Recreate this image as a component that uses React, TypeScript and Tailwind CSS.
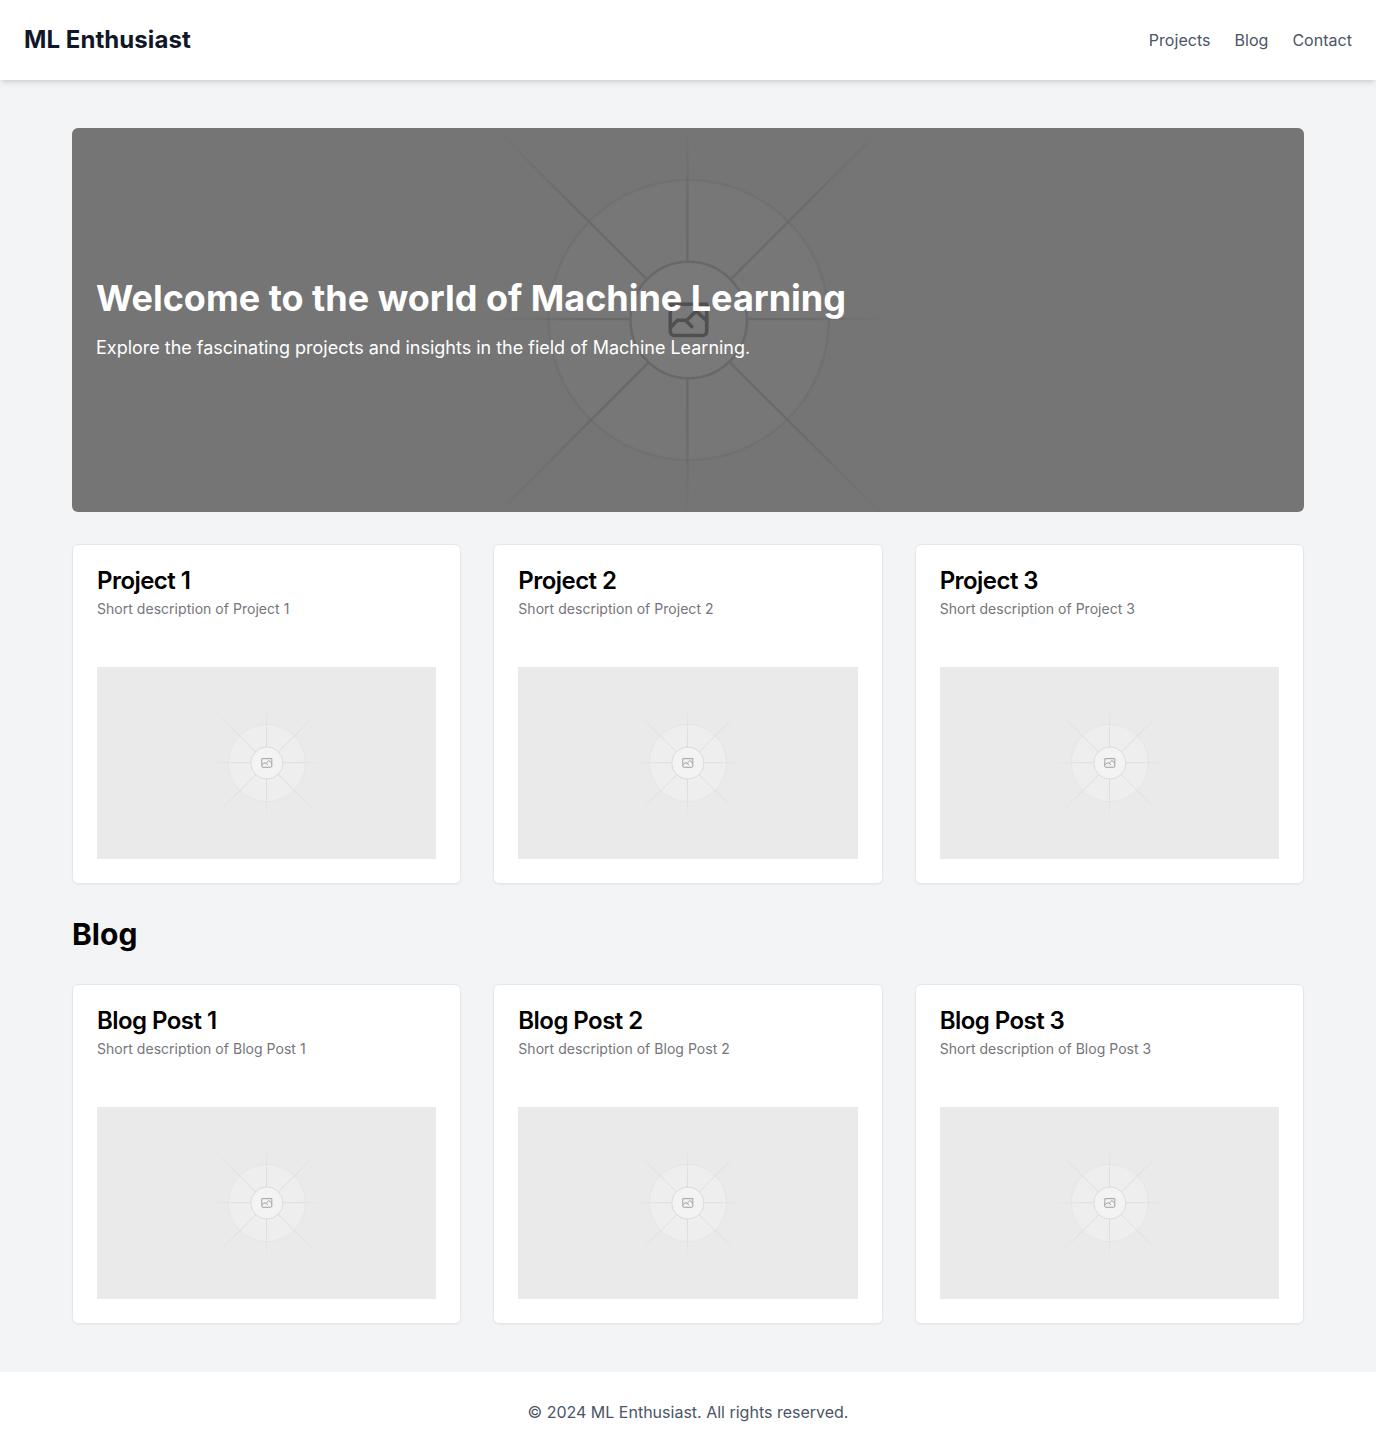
import { useId } from "react";

const spokes = [
  { x1: 615.4, y1: 558, x2: 615.4, y2: 420 },
  { x1: 615.4, y1: 674, x2: 615.4, y2: 812 },
  { x1: 558, y1: 615, x2: 420, y2: 615.01 },
  { x1: 675, y1: 615, x2: 816, y2: 615.01 },
  { x1: 574, y1: 574.5, x2: 420, y2: 421 },
  { x1: 659.5, y1: 574.5, x2: 814, y2: 420 },
  { x1: 576.5, y1: 658.5, x2: 420, y2: 815 },
  { x1: 658, y1: 658.5, x2: 813, y2: 813 },
];

function Placeholder({ className }: { className: string }) {
  const id = useId();
  return (
    <svg
      className={className}
      viewBox="0 0 1232 1232"
      preserveAspectRatio="xMidYMid slice"
      fill="none"
      aria-hidden="true"
    >
      <circle cx="616.7" cy="616" r="140" fill="#fafafa" fillOpacity=".25" />
      <circle cx="616.7" cy="616" r="140" stroke="#c9c9c9" strokeOpacity=".28" strokeWidth="2.5" />
      {spokes.map((s, i) => (
        <g key={i}>
          <linearGradient id={`${id}-${i}`} gradientUnits="userSpaceOnUse" {...s}>
            <stop stopColor="#c9c9c9" stopOpacity=".72" />
            <stop offset=".4" stopColor="#c9c9c9" stopOpacity=".62" />
            <stop offset="1" stopColor="#c9c9c9" stopOpacity="0" />
          </linearGradient>
          <path
            d={`M${s.x1} ${s.y1}L${s.x2} ${s.y2}`}
            stroke={`url(#${id}-${i})`}
            strokeWidth="2.5"
          />
        </g>
      ))}
      <circle cx="616.7" cy="616" r="58.3" fill="#f3f3f3" stroke="#d0d0d0" strokeWidth="2.5" />
      <g stroke="#a0a0a0" strokeWidth="3.6">
        <path d="M598.3 600.2h36.4v27.3a4 4 0 0 1-4 4h-28.4a4 4 0 0 1-4-4z" strokeLinejoin="round" />
        <path d="m598.5 623.5 7-7.3h9.3l9.4-9.2 10.3 9.7M613.5 616l7.3 7.7" />
      </g>
    </svg>
  );
}

function Card({ title }: { title: string }) {
  return (
    <article className="rounded-md border border-gray-200 bg-white shadow-xs">
      <div className="flex flex-col gap-1.5 p-6">
        <h3 className="text-2xl leading-6 font-semibold tracking-[-0.55px] text-black">{title}</h3>
        <p className="text-sm tracking-[0.03px] text-[#75757a]">Short description of {title}</p>
      </div>
      <div className="p-6">
        <Placeholder className="block h-48 w-full bg-[#eaeaea]" />
      </div>
    </article>
  );
}

function CardGrid({ label }: { label: string }) {
  return (
    <div className="grid grid-cols-3 gap-8">
      {[1, 2, 3].map((n) => (
        <Card key={n} title={`${label} ${n}`} />
      ))}
    </div>
  );
}

export default function App() {
  return (
    <div className="flex min-h-screen flex-col bg-gray-100 font-['Inter',sans-serif] text-black">
      <header className="flex h-20 items-center justify-between bg-white px-6 shadow-md">
        <h1 className="text-2xl font-bold tracking-[0.06px] text-gray-900">ML Enthusiast</h1>
        <nav className="flex gap-6 tracking-[0.03px] text-gray-600">
          <a href="#projects">Projects</a>
          <a href="#blog">Blog</a>
          <a href="#contact">Contact</a>
        </nav>
      </header>
      <main className="flex-1 px-[72px] py-12">
        <section className="relative mb-8 h-96 overflow-hidden rounded-md">
          <Placeholder className="block h-full w-full bg-[#eaeaea]" />
          <div className="absolute inset-0 flex flex-col justify-center bg-black/50 px-6 text-white">
            <h2 className="mb-4 text-4xl font-bold tracking-[-0.02px]">
              Welcome to the world of Machine Learning
            </h2>
            <p className="text-lg tracking-[-0.01px]">
              Explore the fascinating projects and insights in the field of Machine Learning.
            </p>
          </div>
        </section>
        <section id="projects" className="mb-8">
          <CardGrid label="Project" />
        </section>
        <section id="blog">
          <h2 className="mb-8 text-3xl font-bold">Blog</h2>
          <CardGrid label="Blog Post" />
        </section>
      </main>
      <footer id="contact" className="flex h-20 items-center justify-center bg-white text-gray-600">
        <p>© 2024 ML Enthusiast. All rights reserved.</p>
      </footer>
    </div>
  );
}
